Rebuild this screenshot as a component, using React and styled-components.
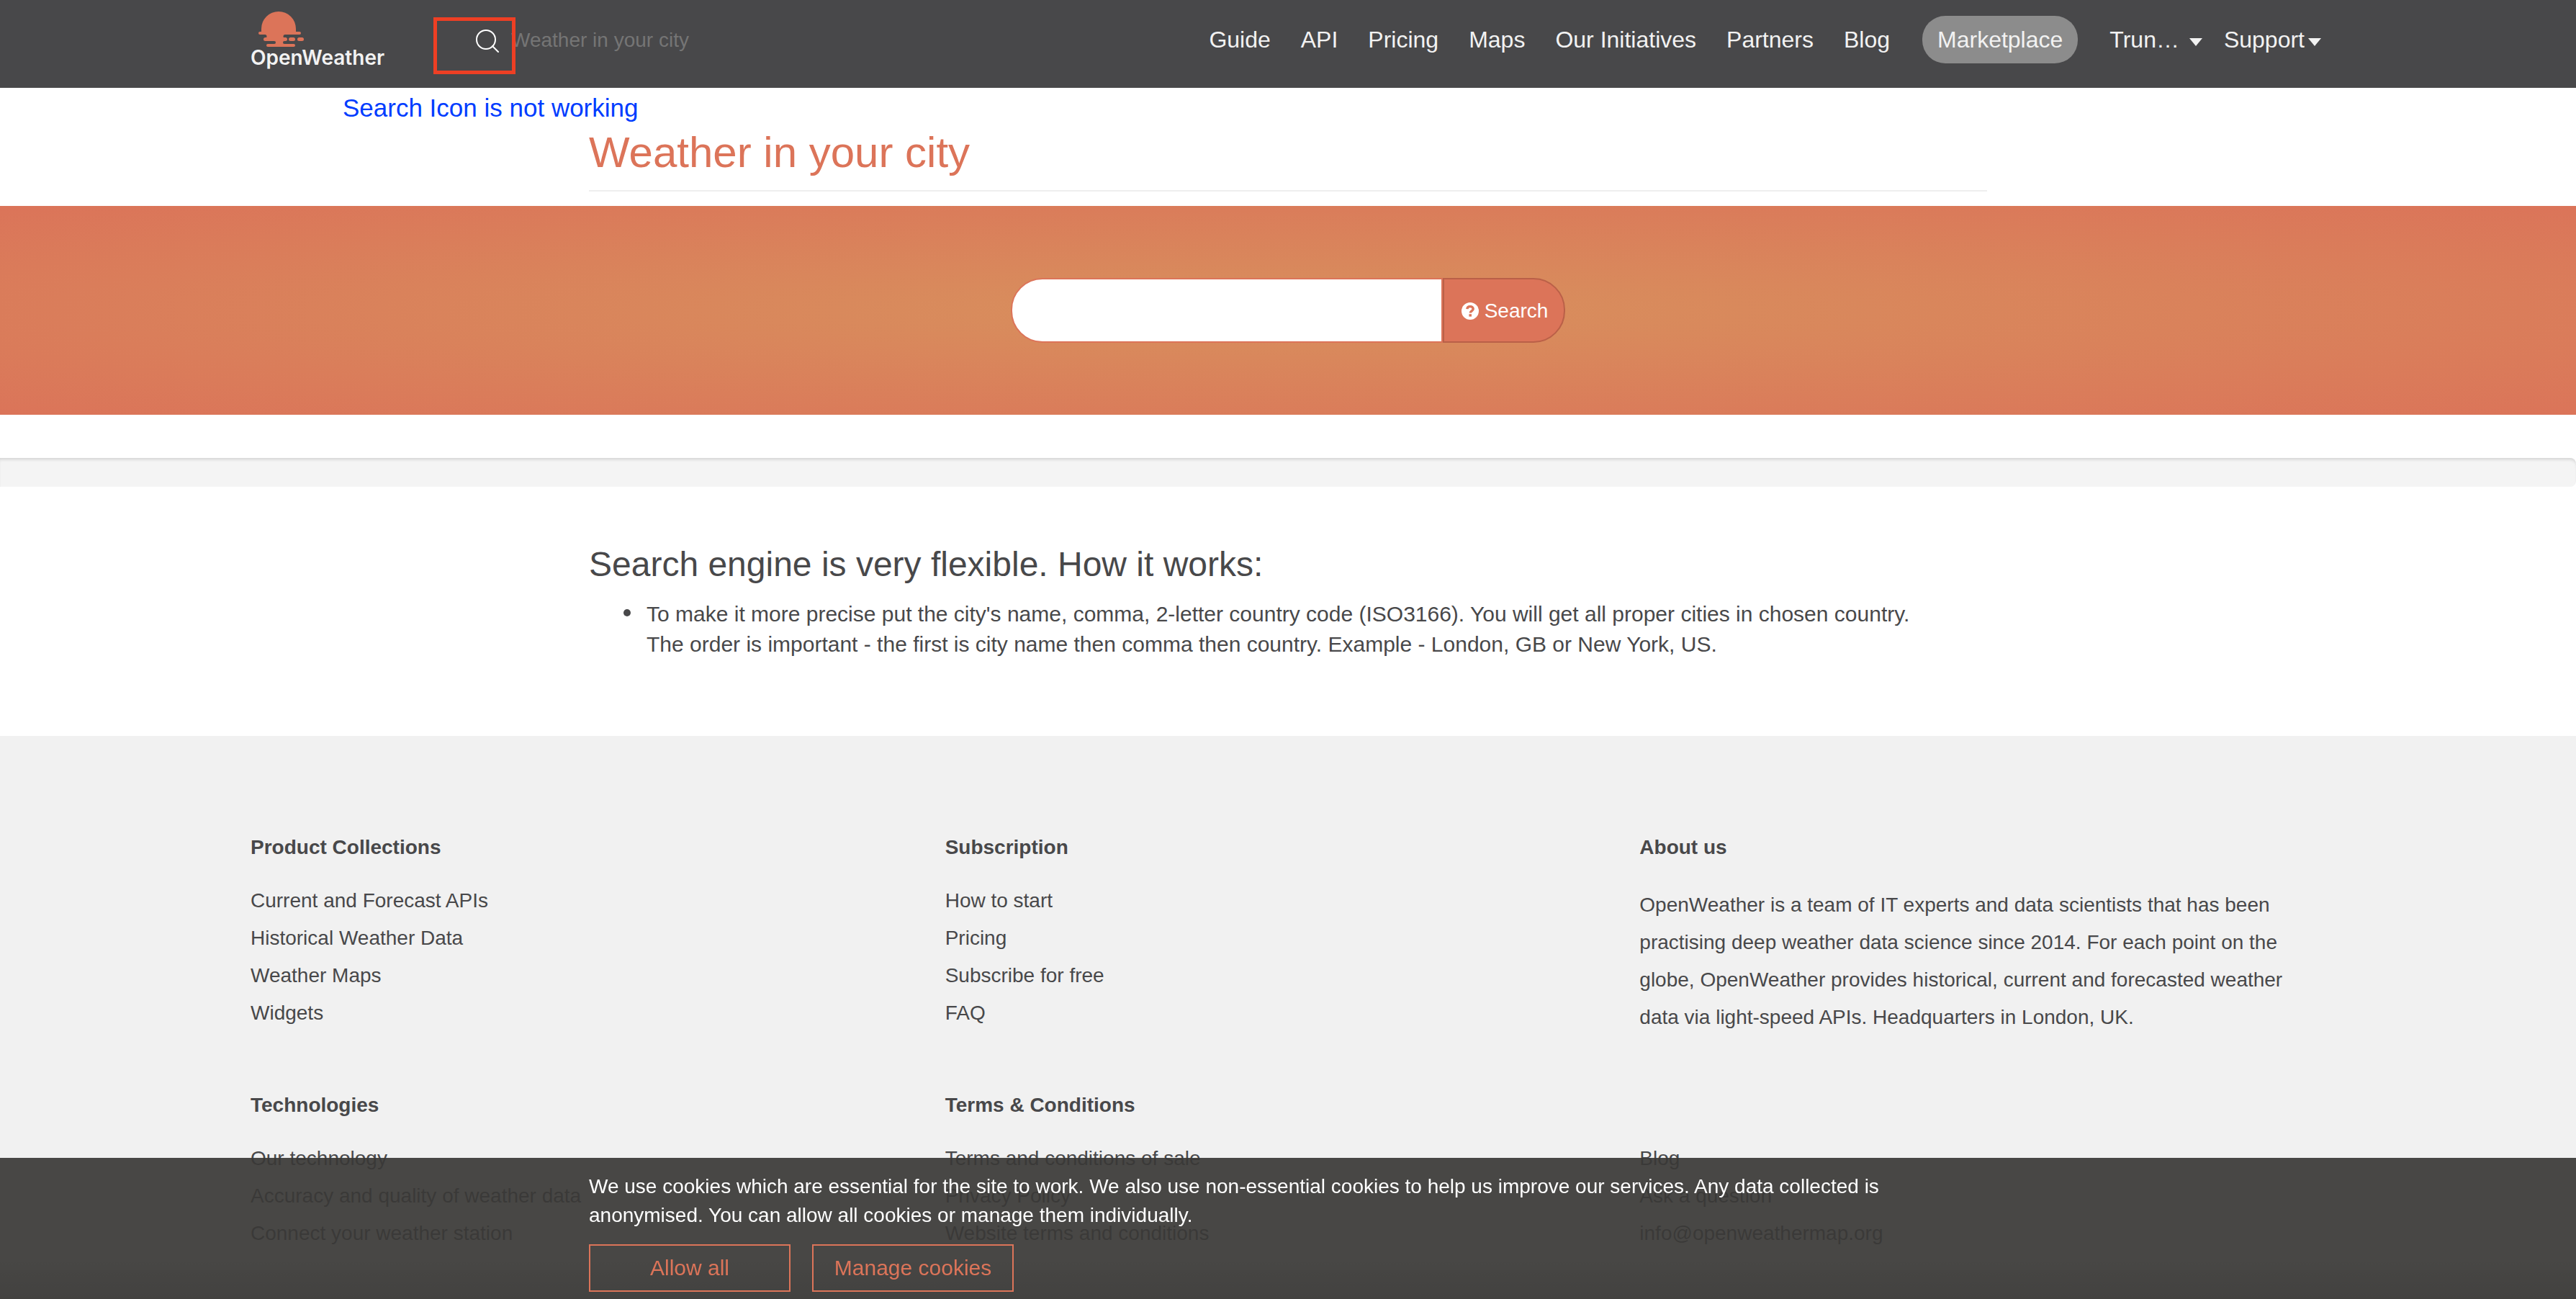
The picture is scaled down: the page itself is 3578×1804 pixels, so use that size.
import React from "react";
import styled, { createGlobalStyle } from "styled-components";

const orange = "#dc7459";
const ink = "#48484a";

const GlobalStyle = createGlobalStyle`
  *, *::before, *::after { box-sizing: border-box; }
  body {
    margin: 0;
    background: #fff;
    color: ${ink};
    font-family: "Liberation Sans", Arial, Helvetica, sans-serif;
    font-size: 28px;
  }
  a { color: inherit; text-decoration: none; }
  button, input { font: inherit; }
  ul, h1, h2, h3, p { margin: 0; padding: 0; }
`;

const Page = styled.div`
  position: relative;
  display: flex;
  flex-direction: column;
`;

const Header = styled.header`
  background: ${ink};
  color: #f2f2f2;
`;

const WideContainer = styled.div`
  width: min(2882px, 100% - 64px);
  margin: 0 auto;
`;

const NarrowContainer = styled.div`
  width: min(1942px, 100% - 64px);
  margin: 0 auto;
`;

const HeaderRow = styled(WideContainer)`
  display: flex;
  align-items: flex-start;
  height: 122px;
`;

const Logo = styled.a`
  display: flex;
  flex-direction: column;
  width: 188px;
  padding-top: 15px;
  font: 600 28px/30px Inter, "Liberation Sans", sans-serif;
  white-space: nowrap;

  svg { margin-left: 11px; }
`;

const HeaderSearch = styled.form`
  display: flex;
  align-items: center;
  gap: 16px;
  height: 64px;
  margin: 24px 0 0 124px;
`;

const IconButton = styled.button`
  display: flex;
  padding: 0;
  border: 0;
  background: none;
  color: #fff;
  cursor: pointer;
`;

const HeaderInput = styled.input`
  width: 400px;
  padding: 0;
  border: 0;
  outline: 0;
  background: none;
  color: #f2f2f2;
  &::placeholder { color: #757575; opacity: 1; }
`;

const Nav = styled.nav`
  display: flex;
  align-items: center;
  height: 66px;
  margin: 22px 6px 0 auto;
  font-size: 32px;
  white-space: nowrap;
`;

const NavLink = styled.a`
  padding: 0 21px;
`;

const PillLink = styled.a`
  display: flex;
  align-items: center;
  height: 66px;
  margin-left: 24px;
  padding: 0 21px;
  border-radius: 32px;
  background: #8c8c8c;
`;

const MenuButton = styled.button`
  display: flex;
  align-items: center;
  gap: ${(p) => p.$gap}px;
  margin-left: ${(p) => p.$lead}px;
  padding: 0;
  border: 0;
  background: none;
  color: inherit;
  cursor: pointer;
`;

const Caret = styled.span`
  margin-top: 6px;
  border: 9px solid transparent;
  border-top: 11px solid currentColor;
  border-bottom: 0;
`;

const HighlightBox = styled.div`
  position: absolute;
  top: 24px;
  left: 602px;
  width: 114px;
  height: 79px;
  border: 5px solid #ee3f24;
  pointer-events: none;
`;

const Note = styled.p`
  position: absolute;
  top: 130px;
  left: 476px;
  color: #003cff;
  font-size: 35px;
  line-height: 40px;
`;

const TitleBlock = styled(NarrowContainer)`
  margin-bottom: 20px;
  padding: 56px 0 18px;
  border-bottom: 2px solid #eee;
`;

const Title = styled.h1`
  color: ${orange};
  font-weight: 400;
  font-size: 60px;
  line-height: 68px;
`;

const Banner = styled.section`
  display: flex;
  justify-content: center;
  padding: 100px 0;
  background: radial-gradient(ellipse farthest-corner at center, #d8905d 0%, #db7459 100%);
`;

const SearchForm = styled.form`
  display: flex;
  height: 90px;
`;

const CityInput = styled.input`
  width: 600px;
  padding: 0 32px;
  border: 2px solid ${orange};
  border-radius: 44px 0 0 44px;
  outline: 0;
  background: #fff;
`;

const SearchButton = styled.button`
  display: flex;
  align-items: center;
  gap: 8px;
  padding: 2px 22px 0 24px;
  border: 2px solid #ba6048;
  border-radius: 0 44px 44px 0;
  background: ${orange};
  color: #fff;
  cursor: pointer;
`;

const Well = styled.div`
  height: 40px;
  margin-top: 60px;
  border-radius: 0 8px 8px 0;
  background: #f4f4f4;
  box-shadow: inset 0 4px 4px -2px rgba(0, 0, 0, 0.14);
`;

const Help = styled(NarrowContainer)`
  padding: 80px 0 106px;
`;

const HelpTitle = styled.h2`
  font-weight: 400;
  font-size: 48px;
  line-height: 56px;
`;

const HelpList = styled.ul`
  padding: 20px 0 0 48px;
  font-size: 30px;
  line-height: 42px;
  list-style: none;
`;

const HelpItem = styled.li`
  display: flex;

  &::before {
    content: "";
    flex: none;
    width: 10px;
    height: 10px;
    margin: 14px 22px 0 0;
    border-radius: 50%;
    background: currentColor;
  }
`;

const Footer = styled.footer`
  min-height: 782px;
  padding-top: 129px;
  background: #f1f1f1;
`;

const FooterGrid = styled(WideContainer)`
  display: grid;
  grid-template-columns: repeat(3, 1fr);
  column-gap: 12px;
  row-gap: 70px;
  line-height: 52px;
`;

const FooterSection = styled.section`
  display: flex;
  flex-direction: column;
`;

const FooterTitle = styled.h3`
  min-height: 52px;
  margin-bottom: 22px;
  font-size: 28px;
  font-weight: 700;
`;

const LinkList = styled.ul`
  list-style: none;
`;

const About = styled.p`
  padding-top: 6px;
`;

const CookieBar = styled.aside`
  position: fixed;
  inset: auto 0 0 0;
  padding: 20px 0 10px;
  background:
    linear-gradient(to bottom, transparent 70%, rgba(0, 0, 0, 0.08) 100%),
    rgba(57, 56, 54, 0.92);
  color: #fff;
  line-height: 40px;
`;

const CookieActions = styled.div`
  display: flex;
  gap: 30px;
  margin-top: 20px;
`;

const CookieButton = styled.button`
  width: 280px;
  height: 66px;
  padding: 0;
  border: 2px solid ${orange};
  background: none;
  color: ${orange};
  font-size: 30px;
  cursor: pointer;
`;

const navItems = ["Guide", "API", "Pricing", "Maps", "Our Initiatives", "Partners", "Blog"];

const footerSections = [
  { title: "Product Collections", links: ["Current and Forecast APIs", "Historical Weather Data", "Weather Maps", "Widgets"] },
  { title: "Subscription", links: ["How to start", "Pricing", "Subscribe for free", "FAQ"] },
  {
    title: "About us",
    text: "OpenWeather is a team of IT experts and data scientists that has been practising deep weather data science since 2014. For each point on the globe, OpenWeather provides historical, current and forecasted weather data via light-speed APIs. Headquarters in London, UK.",
  },
  { title: "Technologies", links: ["Our technology", "Accuracy and quality of weather data", "Connect your weather station"] },
  { title: "Terms & Conditions", links: ["Terms and conditions of sale", "Privacy Policy", "Website terms and conditions"] },
  { title: "", links: ["Blog", "Ask a question", "info@openweathermap.org"] },
];

function SunLogo() {
  return (
    <svg width="63" height="50" viewBox="0 0 63 50" fill={orange} aria-hidden="true">
      <path d="M4 30V25a24 24 0 0 1 48 0v5z" />
      <rect x="0" y="29" width="59" height="4" rx="2" />
      <path d="M9 33a2.500 2.500 0 0 1 0 5H37a2.500 2.500 0 0 1 0-5z" />
      <rect x="7" y="37" width="33" height="5" rx="2.500" />
      <rect x="42" y="37" width="9" height="5" rx="2.500" />
      <rect x="54" y="37" width="9" height="5" rx="2.500" />
      <path d="M22 42a2 2 0 0 1 0 4H36a2 2 0 0 1 0-4z" />
      <rect x="11" y="46" width="40" height="4" rx="2" />
    </svg>
  );
}

function QuestionIcon() {
  return (
    <svg width="24" height="24" viewBox="0 0 24 24" aria-hidden="true">
      <circle cx="12" cy="12" r="12" fill="#fff" />
      <path d="M7.800 9.200C8 6.500 9.800 5.600 12 5.600c2.400 0 4.200 1.300 4.200 3.400 0 2.800-3.900 3-3.900 5.500" fill="none" stroke={orange} strokeWidth="3.400" />
      <rect x="10.400" y="16.200" width="3.600" height="3.400" fill={orange} />
    </svg>
  );
}

export default function App() {
  return (
    <Page>
      <GlobalStyle />
      <Header>
        <HeaderRow>
          <Logo href="#">
            <SunLogo />
            OpenWeather
          </Logo>
          <HeaderSearch>
            <IconButton type="button" aria-label="Search">
              <svg width="34" height="34" viewBox="0 0 34 34" fill="none" stroke="currentColor" strokeWidth="2" strokeLinecap="round">
                <circle cx="15" cy="16" r="13" />
                <path d="M24 25l8 8" />
              </svg>
            </IconButton>
            <HeaderInput placeholder="Weather in your city" aria-label="Weather in your city" />
          </HeaderSearch>
          <Nav>
            {navItems.map((item) => (
              <NavLink key={item} href="#">{item}</NavLink>
            ))}
            <PillLink href="#">Marketplace</PillLink>
            <MenuButton type="button" $gap={14} $lead={44}>Trun… <Caret /></MenuButton>
            <MenuButton type="button" $gap={5} $lead={30}>Support<Caret /></MenuButton>
          </Nav>
        </HeaderRow>
      </Header>

      <main>
        <TitleBlock>
          <Title>Weather in your city</Title>
        </TitleBlock>
        <Banner>
          <SearchForm>
            <CityInput type="text" aria-label="City name" />
            <SearchButton type="button"><QuestionIcon />Search</SearchButton>
          </SearchForm>
        </Banner>
        <Well />
        <Help>
          <HelpTitle>Search engine is very flexible. How it works:</HelpTitle>
          <HelpList>
            <HelpItem>
              <p>
                To make it more precise put the city's name, comma, 2-letter country code (ISO3166). You will get all proper cities in chosen country.<br />
                The order is important - the first is city name then comma then country. Example - London, GB or New York, US.
              </p>
            </HelpItem>
          </HelpList>
        </Help>
      </main>

      <Footer>
        <FooterGrid>
          {footerSections.map(({ title, links, text }, i) => (
            <FooterSection key={i}>
              <FooterTitle as={title ? "h3" : "div"}>{title}</FooterTitle>
              {text && <About>{text}</About>}
              {links && (
                <LinkList>
                  {links.map((link) => (
                    <li key={link}><a href="#">{link}</a></li>
                  ))}
                </LinkList>
              )}
            </FooterSection>
          ))}
        </FooterGrid>
      </Footer>

      <HighlightBox />
      <Note>Search Icon is not working</Note>

      <CookieBar aria-label="Cookies">
        <NarrowContainer>
          <p>
            We use cookies which are essential for the site to work. We also use non-essential cookies to help us improve our services. Any data collected is anonymised. You can allow all cookies or manage them individually.
          </p>
          <CookieActions>
            <CookieButton type="button">Allow all</CookieButton>
            <CookieButton type="button">Manage cookies</CookieButton>
          </CookieActions>
        </NarrowContainer>
      </CookieBar>
    </Page>
  );
}
